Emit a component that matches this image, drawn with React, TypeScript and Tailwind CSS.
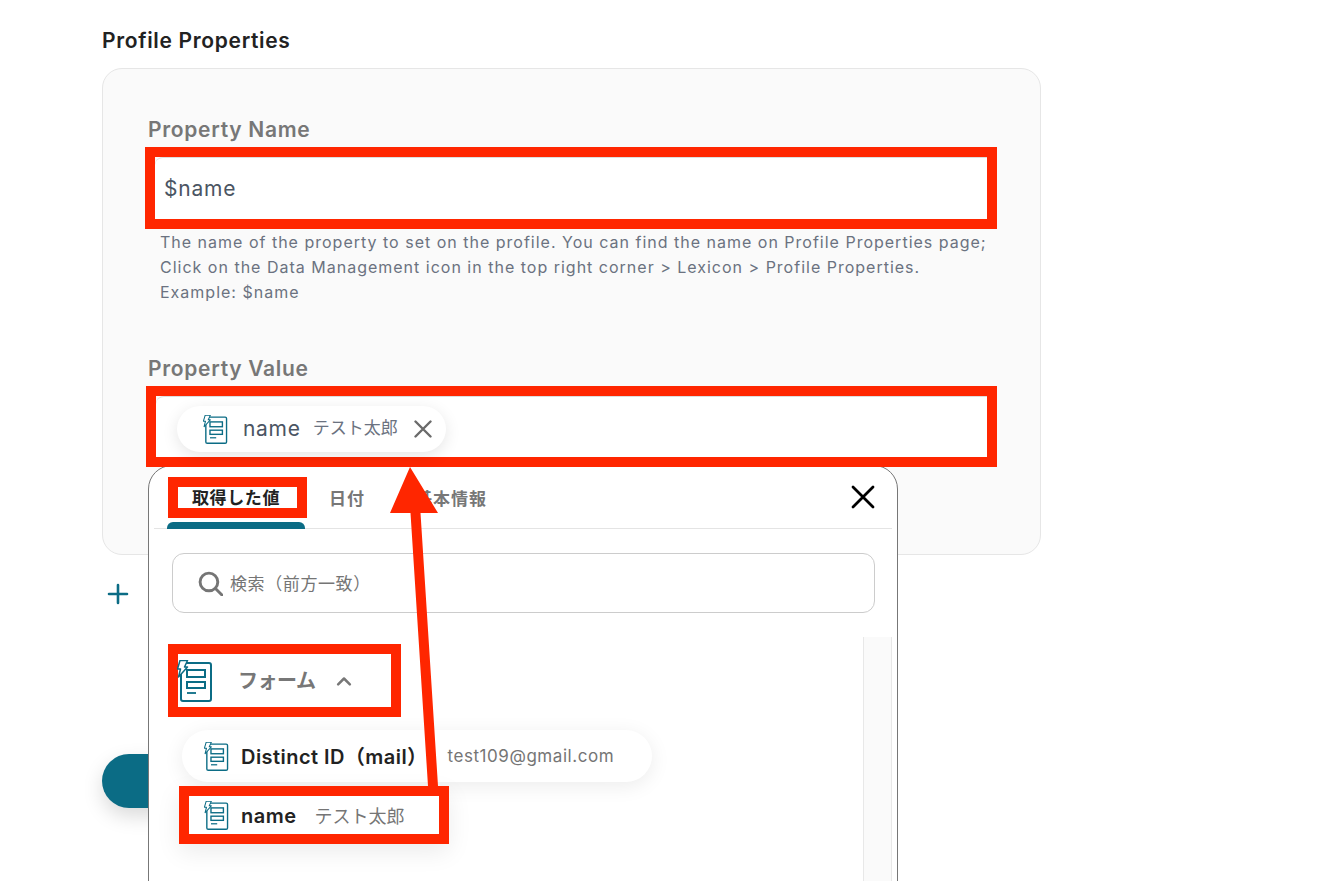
const font = { fontFamily: '"Inter","Noto Sans CJK JP",sans-serif' };

function FormIcon({ className }: { className: string }) {
  return (
    <svg viewBox="0 0 36 42" fill="none" className={className}>
      <rect x="4" y="3" width="30" height="38" rx="2" stroke="#0b6c85" strokeWidth="2" />
      <rect x="10" y="10" width="18" height="7" stroke="#0b6c85" strokeWidth="2" />
      <rect x="10" y="22" width="18" height="6" stroke="#0b6c85" strokeWidth="2" />
      <path d="M10 33h9" stroke="#0b6c85" strokeWidth="1.8" />
      <path d="M3 0.5H10.5L7.5 7H10.5L1.5 17L3.5 9H0.5Z" fill="#ffffff" stroke="#0b6c85" strokeWidth="1.5" strokeLinejoin="round" />
    </svg>
  );
}

export default function App() {
  return (
    <div className="relative h-[881px] w-[1334px] overflow-hidden bg-white" style={font}>
      <div className="pl-[102px] pt-[27px]">
        <h2 className="mb-[13px] h-[28px] text-[21px] leading-[28px] font-semibold tracking-[0.67px] text-[#222222]">Profile Properties</h2>

        <div className="h-[487px] w-[939px] rounded-[20px] border border-[#e6e6e6] bg-[#fafafa] pl-[42px] pt-[49px]">
          <label className="mb-[5px] ml-[3px] block h-[24px] text-[21px] leading-[24px] font-semibold tracking-[0.7px] text-[#777777]">Property Name</label>
          <div className="h-[82px] w-[852px] border-[10px] border-[#ff2600]">
            <div className="flex h-full items-center rounded-tl-lg border-t border-[#dddddd] bg-white pl-[9px] text-[21px] tracking-[0.8px] text-[#4b5563]">$name</div>
          </div>
          <p className="ml-[15px] w-[840px] pt-px text-[16px] leading-[25px] tracking-[1px] text-[#6b7280]">
            The name of the property to set on the profile. You can find the name on Profile Properties page;
            <br />
            Click on the Data Management icon in the top right corner &gt; Lexicon &gt; Profile Properties.
            <br />
            Example: $name
          </p>
          <label className="mb-[5px] ml-[3px] mt-[52px] block h-[24px] text-[21px] leading-[24px] font-semibold tracking-[0.7px] text-[#777777]">Property Value</label>
          <div className="relative z-20 ml-px h-[81px] w-[851px] border-[10px] border-[#ff2600]">
            <div className="flex h-full items-center rounded-tl-lg border-t border-[#dddddd] bg-white pl-[21px] pt-[4px]">
              <div className="flex h-[46px] w-[269px] items-center rounded-full bg-white pl-[26px] shadow-[0_4px_16px_rgba(0,0,0,0.1)]">
                <FormIcon className="h-[29px] w-[25px]" />
                <span className="ml-[15px] text-[21px] tracking-[0.7px] text-[#4b5563]">name</span>
                <span className="ml-[12px] text-[17px] text-[#6b7280]">テスト太郎</span>
                <svg viewBox="0 0 18 18" className="ml-[16px] h-[18px] w-[18px]" fill="none" stroke="#6b6b6b" strokeWidth="2.4" strokeLinecap="round">
                  <path d="M1.5 1.5L16.5 16.5M16.5 1.5L1.5 16.5" />
                </svg>
              </div>
            </div>
          </div>
        </div>

        <svg viewBox="0 0 22 22" className="ml-[5px] mt-[28px] h-[22px] w-[22px]" fill="none" stroke="#0b6c85" strokeWidth="2.6" strokeLinecap="round">
          <path d="M11 2V20M2 11H20" />
        </svg>

        <div className="mt-[149px] h-[54px] w-[220px] rounded-full bg-[#0b6c85] shadow-[0_8px_20px_rgba(0,0,0,0.15)]" />
      </div>

      {/* Popup */}
      <div className="absolute left-[148px] top-[465px] z-10 h-[440px] w-[750px] rounded-t-[24px] border border-[#777777] bg-white">
        <div className="relative mx-[5px] flex h-[63px] items-start border-b border-[#e4e4e4] pl-[14px] pt-[11px]">
          <div className="flex h-[41px] w-[139px] items-center justify-center border-[10px] border-[#ff2600] bg-white pr-[3px] pt-[2px] text-[17px] font-bold tracking-[0.6px] text-[#222222]">
            取得した値
          </div>
          <span className="ml-[22px] mt-[10px] text-[17px] leading-[24px] font-semibold tracking-[1px] text-[#777777]">日付</span>
          <span className="ml-[50px] mt-[10px] text-[17px] leading-[24px] font-semibold tracking-[1px] text-[#777777]">基本情報</span>
          <div className="absolute bottom-[-1px] left-[13px] h-[7px] w-[138px] rounded-t-md bg-[#0b6c85]" />
          <svg viewBox="0 0 24 24" className="absolute right-[17px] top-[19px] h-[24px] w-[24px]" fill="none" stroke="#000000" strokeWidth="2.8" strokeLinecap="round">
            <path d="M2 2L22 22M22 2L2 22" />
          </svg>
        </div>

        <div className="ml-[23px] mr-[22px] mt-[24px] flex h-[60px] items-center rounded-xl border border-[#cccccc] bg-white pl-[25px]">
          <svg viewBox="0 0 24 24" className="h-[25px] w-[25px]" fill="none" stroke="#757575" strokeWidth="2.8" strokeLinecap="round">
            <circle cx="10.5" cy="10.5" r="8.5" />
            <path d="M17 17L23 23" />
          </svg>
          <span className="ml-[7px] pt-[3px] text-[17px] tracking-[0.6px] text-[#757575]">検索（前方一致）</span>
        </div>

        <div className="relative mt-[31px]">
          <div className="absolute right-[5px] top-[-7px] h-[300px] w-[29px] border-x border-[#e8e8e8] bg-[#fafafa]" />
          <div className="ml-[19px] flex h-[73px] w-[233px] items-center border-[10px] border-[#ff2600] bg-white">
            <FormIcon className="ml-[-1px] h-[42px] w-[36px]" />
            <span className="ml-[25px] text-[20px] font-bold tracking-[-0.5px] text-[#777777]">フォーム</span>
            <svg viewBox="0 0 18 12" className="ml-[21px] h-[10px] w-[16px]" fill="none" stroke="#777777" strokeWidth="3" strokeLinecap="round" strokeLinejoin="round">
              <path d="M2 10L9 3L16 10" />
            </svg>
          </div>

          <div className="relative ml-[33px] mt-[13px] flex h-[52px] w-[470px] items-center rounded-full bg-white pl-[22px] shadow-[0_4px_20px_rgba(0,0,0,0.08)]">
            <FormIcon className="h-[29px] w-[25px]" />
            <span className="ml-[12px] pt-[2px] text-[20px] font-semibold tracking-[0.45px] text-[#222222]">Distinct ID（mail）</span>
            <span className="ml-[20px] pt-[2px] text-[17px] tracking-[0.55px] text-[#757575]">test109@gmail.com</span>
          </div>

          <div className="relative ml-[30px] mt-[4px] flex h-[58px] w-[270px] items-center border-[10px] border-[#ff2600] bg-white pl-[15px] shadow-[0_8px_24px_rgba(0,0,0,0.08)]">
            <FormIcon className="h-[29px] w-[25px]" />
            <span className="ml-[12px] pt-[2px] text-[20px] font-semibold tracking-[0.5px] text-[#222222]">name</span>
            <span className="ml-[18px] pt-[2px] text-[18px] text-[#757575]">テスト太郎</span>
          </div>
        </div>
      </div>

      {/* Annotation arrow */}
      <svg className="absolute left-[380px] top-[460px] z-30 h-[340px] w-[70px]" viewBox="0 0 70 340" fill="#ff2600">
        <path d="M30 7L58 53L40.5 53L58 326H48L30.5 53L10 53Z" />
      </svg>
    </div>
  );
}
